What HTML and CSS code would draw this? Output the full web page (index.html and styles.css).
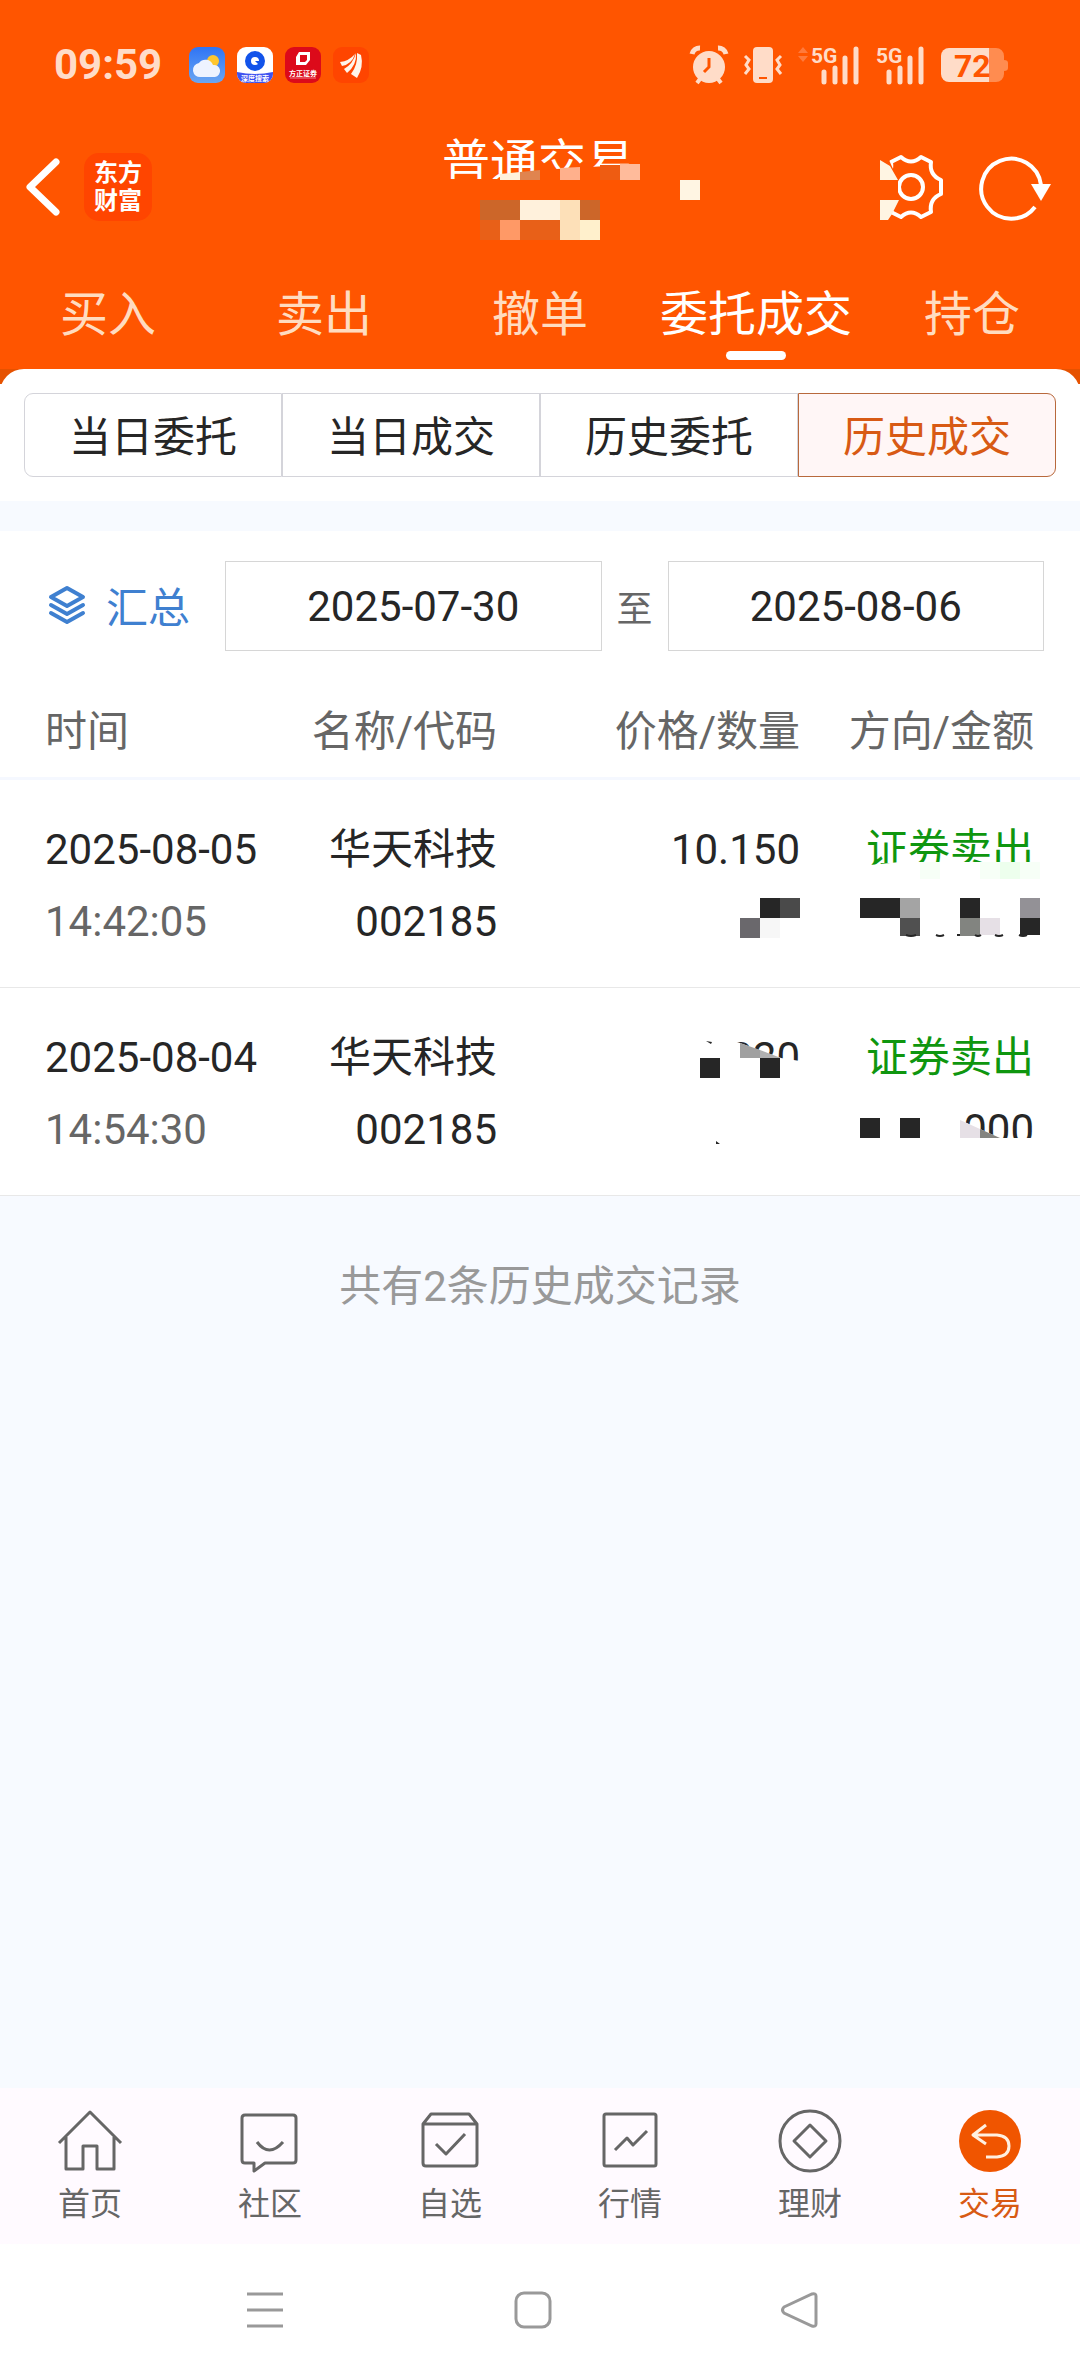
FILE: index.html
```
<!DOCTYPE html>
<html lang="zh-CN">
<head>
    <meta charset="UTF-8">
    <meta name="viewport" content="width=device-width, initial-scale=1.0">
    <title>普通交易</title>
    <link rel="stylesheet" href="styles.css">
</head>
<body>
    <header class="header">
        <div class="status-bar">
            <span class="time">09:59</span>
            <div class="app-list">
                <svg width="36" height="36" viewBox="0 0 36 36">
                    <defs>
                        <linearGradient id="sky" x1="0" y1="0" x2="0" y2="1">
                            <stop offset="0" stop-color="#2f74f5"/>
                            <stop offset="1" stop-color="#6aa6f2"/>
                        </linearGradient>
                    </defs>
                    <rect width="36" height="36" rx="9" fill="url(#sky)"/>
                    <circle cx="24" cy="14" r="6" fill="#ffc62e"/>
                    <path d="M12 30a7 7 0 0 1-2-14 8 8 0 0 1 14 2 6 6 0 0 1 2 12z" fill="#eef3ff"/>
                </svg>
                <svg width="36" height="36" viewBox="0 0 36 36">
                    <rect width="36" height="36" rx="9" fill="#fff"/>
                    <path d="M0 25q18 4 36 0v2a9 9 0 0 1-9 9H9a9 9 0 0 1-9-9z" fill="#3f52f0"/>
                    <circle cx="18" cy="14" r="7" fill="none" stroke="#1253ea" stroke-width="6"/>
                    <path d="M18 14h6v6z" fill="#1253ea"/>
                    <text x="18" y="34" class="app-text">深度搜索</text>
                </svg>
                <svg width="36" height="36" viewBox="0 0 36 36">
                    <rect width="36" height="36" rx="9" fill="#dc0a1a"/>
                    <path d="M14 5h11v8l-4 5H11v-8zM15 8v7h5l2-2V8z" fill="#fff" fill-rule="evenodd"/>
                    <text x="18" y="29" class="app-text">方正证券</text>
                    <path d="M5 31h26" stroke="#f0808a"/>
                </svg>
                <svg width="36" height="36" viewBox="0 0 36 36">
                    <rect width="36" height="36" rx="9" fill="#ff4500"/>
                    <path d="M7 15q9-1 15-8-3 10-13 12zM11 22q9-5 12-16 1 12-9 20zM18 27q7-9 6-21l4 2q3 12-4 23z" fill="#fff5ea"/>
                </svg>
            </div>
            <div class="status-icons">
                <svg width="38" height="38" viewBox="0 0 38 38">
                    <circle cx="19" cy="21" r="16" fill="#ffdcc8"/>
                    <path d="M2 8a8 8 0 0 1 8-6M28 2a8 8 0 0 1 8 6" fill="none" stroke="#ffdcc8" stroke-width="5"/>
                    <path d="M10 33l-3 4M28 33l3 4" stroke="#ffdcc8" stroke-width="4"/>
                    <path d="M19 12v9l-5 5" fill="none" stroke="#ff5500" stroke-width="3"/>
                </svg>
                <svg width="38" height="38" viewBox="0 0 38 38">
                    <rect x="9" y="1" width="20" height="36" rx="4" fill="#ffdcc8"/>
                    <path d="M15 32h8" stroke="#ff5500" stroke-width="2"/>
                    <path d="M1 10l4 4-3 5 3 4-4 5M37 10l-4 4 3 5-3 4 4 5" fill="none" stroke="#ffdcc8" stroke-width="3"/>
                </svg>
                <svg width="62" height="38" viewBox="0 0 62 38">
                    <path d="M0 7l5-6 5 6zM0 10h10l-5 6z" fill="#ff7a3c"/>
                    <text x="13" y="17" class="net-text">5G</text>
                    <path d="M26 36V26M37 36V22M47 36V12M58 36V3" stroke="#ffdcc8" stroke-width="5" stroke-linecap="round"/>
                </svg>
                <svg width="49" height="38" viewBox="0 0 49 38">
                    <text x="0" y="17" class="net-text">5G</text>
                    <path d="M13 36V26M24 36V22M34 36V12M45 36V3" stroke="#ffdcc8" stroke-width="5" stroke-linecap="round"/>
                </svg>
                <svg width="67" height="34" viewBox="0 0 67 34">
                    <path d="M48 0h7a8 8 0 0 1 8 8v4q4 0 4 3v5q0 3-4 3v3a8 8 0 0 1-8 8h-7z" fill="#ff8c50"/>
                    <path d="M8 0h40v34H8a8 8 0 0 1-8-8V8a8 8 0 0 1 8-8z" fill="#ffdcc8"/>
                    <text x="13" y="29" class="battery-text">72</text>
                </svg>
            </div>
        </div>
        <div class="title-bar">
            <div class="title-left">
                <a href="#" class="back" aria-label="返回">
                    <svg width="34" height="58" viewBox="0 0 34 58">
                        <path d="M30 4L4 29l26 25" fill="none" stroke="#fff" stroke-width="7" stroke-linecap="round" stroke-linejoin="round"/>
                    </svg>
                </a>
                <a href="#" class="logo">东方<br>财富</a>
            </div>
            <h1>普通交易</h1>
            <div class="title-right">
                <button class="icon-btn" aria-label="设置">
                    <svg width="66" height="66" viewBox="-33 -33 66 66">
                        <path d="M-10-30Q0-21 10-30L20-25Q18-12 30-7L30 7Q18 12 20 25L10 30Q0 21-10 30L-20 25Q-18 12-30 7L-30-7Q-18-12-20-25Z" fill="none" stroke="#fff" stroke-width="4" stroke-linejoin="round"/>
                        <circle r="12" fill="none" stroke="#fff" stroke-width="4"/>
                        <path d="M-33-27h11l9 20v14l-8 20h-12z" fill="#ff5500"/>
                        <path d="M-31-27l10 6 8 14h-18zM-31 13h19l-7 14-4 6h-8z" fill="#fff5e3"/>
                    </svg>
                </button>
                <button class="icon-btn" aria-label="刷新">
                    <svg width="72" height="66" viewBox="-33 -33 72 66">
                        <path d="M24 20A30 30 0 1 1 30-2" fill="none" stroke="#fff" stroke-width="4"/>
                        <path d="M20-3h20L30 14z" fill="#fff"/>
                    </svg>
                </button>
            </div>
            <svg class="title-mosaic" width="340" height="114" viewBox="0 0 340 114">
                <path d="M70 49h60l40-9 100-6v36H70z" fill="#ff5500"/>
                <path d="M130 44l20-2v8h-20z" fill="#fff1dc"/>
                <path d="M150 42l20-2v10h-20z" fill="#e0844f"/>
                <path d="M190 38l20-1v13h-20z" fill="#ffb08c"/>
                <path d="M230 35h20v15h-20z" fill="#ee5c12"/>
                <path d="M250 34h20v16h-20z" fill="#ffbb9b"/>
                <path d="M310 50h20v20h-20z" fill="#fff5e3"/>
                <path d="M110 70h40v20h-40zM210 70h20v20h-20z" fill="#cc6629"/>
                <path d="M150 70h40v20h-40z" fill="#fff1dc"/>
                <path d="M190 70h20v40h-20z" fill="#fde0b8"/>
                <path d="M110 90h20v20h-20zM150 90h40v20h-40z" fill="#e86018"/>
                <path d="M130 90h20v20h-20z" fill="#ff9966"/>
                <path d="M210 90h20v20h-20z" fill="#fff0cc"/>
            </svg>
        </div>
        <nav class="tabs">
            <a href="#">买入</a>
            <a href="#">卖出</a>
            <a href="#">撤单</a>
            <a href="#" class="active">委托成交</a>
            <a href="#">持仓</a>
        </nav>
    </header>
    <main class="main">
        <div class="panel-wrapper">
            <div class="panel">
                <div class="segment">
                    <button>当日委托</button>
                    <button>当日成交</button>
                    <button>历史委托</button>
                    <button class="active">历史成交</button>
                </div>
            </div>
        </div>
        <section class="records">
            <form class="filter">
                <button type="button" class="summary">
                    <svg width="38" height="38" viewBox="0 0 38 38">
                        <path d="M19 2l16 9-16 9L3 11zM3 19l16 9 16-9M3 27l16 9 16-9" fill="none" stroke="#3f80d0" stroke-width="4" stroke-linecap="round" stroke-linejoin="round"/>
                    </svg>
                    汇总
                </button>
                <input type="text" id="start" aria-label="开始日期" value="2025-07-30">
                <label for="end">至</label>
                <input type="text" id="end" value="2025-08-06">
            </form>
            <table class="list">
                <thead>
                    <tr>
                        <th class="col-time">时间</th>
                        <th class="col-name">名称/代码</th>
                        <th class="col-price">价格/数量</th>
                        <th class="col-side">方向/金额</th>
                    </tr>
                </thead>
                <tbody>
                    <tr>
                        <td class="col-time">2025-08-05<br><span class="clock">14:42:05</span></td>
                        <td class="col-name">华天科技<br>002185</td>
                        <td class="col-price">10.150
                            <svg class="mosaic" width="120" height="207" viewBox="0 0 120 207">
                                <path d="M80 118h20v20H80z" fill="#262626"/>
                                <path d="M100 118h20v20h-20z" fill="#4a4a4a"/>
                                <path d="M60 138h20v20H60z" fill="#6a686c"/>
                                <path d="M80 138h20v20H80z" fill="#f7f7f7"/>
                            </svg>
                        </td>
                        <td class="col-side"><span class="sell">证券卖出</span>
                            <svg class="mosaic" width="240" height="207" viewBox="0 0 240 207">
                                <path d="M20 86l40-4h150v24H20z" fill="#fff"/>
                                <path d="M80 82h20v17H80zM140 82h20v17h-20zM180 82h20v17h-20z" fill="#f7fff7"/>
                                <path d="M160 82h20v17h-20z" fill="#edffed"/>
                                <path d="M20 118h40v20H20zM120 118h20v20h-20zM180 138h20v17h-20z" fill="#262626"/>
                                <path d="M60 118h20v20H60z" fill="#a4a4a4"/>
                                <path d="M60 138h20v18H60z" fill="#505050"/>
                                <path d="M120 138h20v18h-20z" fill="#828480"/>
                                <path d="M140 138h20v17h-20z" fill="#e6e0e6"/>
                                <path d="M180 118h20v20h-20z" fill="#939196"/>
                                <path d="M66 155q5 2 10 0M96 155q4 2 8 0M117 155h3M135 155q3 2 6 0M155 155q4 2 8 0M179 155q4 2 8 0" fill="none" stroke="#262626" stroke-width="2"/>
                            </svg>
                        </td>
                    </tr>
                    <tr>
                        <td class="col-time">2025-08-04<br><span class="clock">14:54:30</span></td>
                        <td class="col-name">华天科技<br>002185</td>
                        <td class="col-price">020
                            <svg class="mosaic" width="120" height="207" viewBox="0 0 120 207">
                                <path d="M40 50l20 5 41 15 19 3v20H40z" fill="#fff"/>
                                <path d="M60 55l20 7v8H60z" fill="#a0a0a0"/>
                                <path d="M80 62l21 8H80z" fill="#b0b0b0"/>
                                <path d="M20 70h20v20H20zM80 70h20v20H80zM26 53l6 1-1 2zM36 153l4 3h-4z" fill="#262626"/>
                            </svg>
                        </td>
                        <td class="col-side"><span class="sell">证券卖出</span><br>000
                            <svg class="mosaic" width="240" height="207" viewBox="0 0 240 207">
                                <path d="M110 129l10 3 40 18h50v18H110z" fill="#fff"/>
                                <path d="M120 132l20 9v9h-20z" fill="#e6e0e6"/>
                                <path d="M140 141l20 9h-20z" fill="#848480"/>
                                <path d="M20 130h20v20H20zM60 130h20v20H60z" fill="#262626"/>
                            </svg>
                        </td>
                    </tr>
                </tbody>
            </table>
        </section>
        <p class="total">共有2条历史成交记录</p>
    </main>
    <nav class="tab-bar">
        <a href="#">
            <svg width="66" height="66" viewBox="0 0 66 66">
                <path d="M2 35L33 4l31 31M9 29v32h17V38h14v23h17V29" fill="none"/>
            </svg>
            首页
        </a>
        <a href="#">
            <svg width="66" height="66" viewBox="0 0 66 66">
                <path d="M8 7h48q3 0 3 3v42q0 3-3 3H28l-11 8v-8H8q-3 0-3-3V10q0-3 3-3zM20 34q12 16 26 0" fill="none"/>
            </svg>
            社区
        </a>
        <a href="#">
            <svg width="66" height="66" viewBox="0 0 66 66">
                <path d="M6 16l8-10h38l8 10v39q0 3-3 3H9q-3 0-3-3zM6 16h54M19 36l10 10 19-20" fill="none"/>
            </svg>
            自选
        </a>
        <a href="#">
            <svg width="66" height="66" viewBox="0 0 66 66">
                <rect x="7" y="6" width="52" height="52" rx="2" fill="none"/>
                <path d="M18 42l12-12 6 7 14-14" fill="none"/>
            </svg>
            行情
        </a>
        <a href="#">
            <svg width="66" height="66" viewBox="0 0 66 66">
                <circle cx="33" cy="33" r="30" fill="none"/>
                <path d="M33 17l16 16-16 16-16-16z" fill="none"/>
            </svg>
            理财
        </a>
        <a href="#" class="active">
            <svg width="66" height="66" viewBox="0 0 66 66">
                <circle cx="33" cy="33" r="31" fill="#f05500" stroke="none"/>
                <path d="M29 17L16 27l13 9M16 27h24q12 1 12 11t-12 11H29" fill="none" stroke="#fff0e0"/>
            </svg>
            交易
        </a>
    </nav>
    <div class="system-bar">
        <button aria-label="最近任务">
            <svg width="38" height="38" viewBox="0 0 38 38">
                <path d="M1 3h36M1 19h36M1 35h36"/>
            </svg>
        </button>
        <button aria-label="主屏幕">
            <svg width="38" height="38" viewBox="0 0 38 38">
                <rect x="2" y="2" width="34" height="34" rx="8"/>
            </svg>
        </button>
        <button aria-label="返回上一页">
            <svg width="38" height="38" viewBox="0 0 38 38">
                <path d="M3 16L31 3q4-1 4 2v28q0 3-4 2L3 22q-3-3 0-6z"/>
            </svg>
        </button>
    </div>
</body>
</html>
```
FILE: styles.css
```
* {
    box-sizing: border-box;
    margin: 0;
    padding: 0;
}
body {
    display: flex;
    flex-direction: column;
    min-height: 100vh;
    background: #f7faff;
    color: #262626;
    font-family: Roboto, "Noto Sans CJK SC", sans-serif;
    font-size: 42px;
}
a {
    color: inherit;
    text-decoration: none;
}
button {
    border: 0;
    background: none;
    color: inherit;
    font: inherit;
}
svg {
    display: block;
    flex: none;
    overflow: visible;
}

/* 顶部 */
.header {
    background: #ff5500;
    color: #fff;
}
.status-bar {
    display: flex;
    align-items: center;
    height: 130px;
    padding: 0 72px 0 54px;
}
.time {
    color: #ffdcc8;
    font-weight: 700;
    line-height: 48px;
}
.app-list {
    display: flex;
    gap: 12px;
    margin-left: 27px;
}
.app-text {
    fill: #fff;
    font-size: 7px;
    font-weight: 700;
    text-anchor: middle;
}
.status-icons {
    display: flex;
    align-items: center;
    gap: 16px;
    margin-left: auto;
}
.net-text {
    fill: #ffdcc8;
    font-size: 21px;
    font-weight: 700;
}
.battery-text {
    fill: #ff5500;
    font-size: 32px;
    font-weight: 700;
}
.title-bar {
    position: relative;
    display: grid;
    grid-template-columns: 1fr auto 1fr;
    align-items: center;
    height: 114px;
    padding: 0 30px 0 26px;
}
.title-left {
    display: flex;
    align-items: center;
    gap: 24px;
}
.title-right {
    display: flex;
    align-items: center;
    justify-content: flex-end;
    gap: 34px;
}
.logo {
    width: 68px;
    height: 68px;
    padding-top: 6px;
    border-radius: 15px;
    background: #ff4500;
    font-size: 24px;
    font-weight: 700;
    line-height: 28px;
    text-align: center;
}
.title-bar h1 {
    align-self: start;
    font-size: 48px;
    font-weight: 400;
    line-height: 66px;
}
.title-mosaic {
    position: absolute;
    top: 0;
    left: 50%;
    margin-left: -170px;
}
.tabs {
    display: grid;
    grid-template-columns: repeat(5, 1fr);
}
.tabs a {
    padding: 38px 0 9px;
    color: #ffdcc0;
    font-size: 48px;
    line-height: 66px;
    text-align: center;
}
.tabs a::after {
    content: "";
    display: block;
    width: 60px;
    height: 9px;
    margin: 3px auto 0;
    border-radius: 5px;
}
.tabs .active {
    color: #fff;
}
.tabs .active::after {
    background: #fff;
}

/* 内容 */
.main {
    flex: 1;
}
.panel-wrapper {
    background: linear-gradient(#e65200 15px, #fff 15px);
}
.panel {
    padding: 24px;
    border-radius: 24px 24px 0 0;
    background: #fff;
}
.segment {
    display: grid;
    grid-template-columns: repeat(4, 1fr);
}
.segment button {
    height: 84px;
    padding-bottom: 3px;
    border: 1px solid #d4d4da;
}
.segment button:first-child {
    border-radius: 9px 0 0 9px;
}
.segment button:last-child {
    border-radius: 0 9px 9px 0;
}
.segment .active {
    border-color: #b8693c;
    background: #fff6f6;
    color: #d85a14;
}
.records {
    margin-top: 30px;
    background: #fff;
}
.filter {
    display: flex;
    align-items: center;
    padding: 30px 36px 33px 48px;
}
.summary {
    display: flex;
    align-items: center;
    gap: 20px;
    margin-right: 35px;
    padding-bottom: 3px;
    color: #3f80d0;
}
.filter input {
    flex: 1;
    min-width: 0;
    height: 90px;
    border: 1px solid #d6d6d6;
    background: #fff;
    color: #262626;
    font: inherit;
    text-align: center;
}
.filter label {
    width: 66px;
    color: #666;
    font-size: 36px;
    text-align: center;
}
.list {
    width: 100%;
    border-spacing: 0;
    table-layout: fixed;
}
.list th {
    height: 96px;
    padding-bottom: 6px;
    border-bottom: 3px solid #f5f8ff;
    color: #666;
    font-weight: 400;
    text-align: right;
}
.list td {
    position: relative;
    height: 208px;
    padding-top: 34px;
    border-bottom: 1px solid #e8e8e8;
    line-height: 72px;
    text-align: right;
    vertical-align: top;
}
.list .col-time {
    width: 265px;
    padding-left: 45px;
    text-align: left;
}
.list .col-name {
    width: 232px;
}
.list .col-side {
    width: 280px;
    padding-right: 46px;
}
.clock {
    color: #666;
}
.sell {
    color: #0f960f;
}
.mosaic {
    position: absolute;
    top: 0;
    right: 0;
}
.total {
    padding-top: 61px;
    color: #999;
    line-height: 60px;
    text-align: center;
}

/* 底部 */
.tab-bar {
    display: grid;
    grid-template-columns: repeat(6, 1fr);
    height: 156px;
    background: #fffaff;
    color: #666;
    font-size: 32px;
    line-height: 48px;
}
.tab-bar a {
    display: flex;
    flex-direction: column;
    align-items: center;
    gap: 6px;
    padding-top: 20px;
}
.tab-bar svg {
    stroke: #666;
    stroke-width: 3;
    stroke-linejoin: round;
}
.tab-bar .active {
    color: #d85a14;
}
.system-bar {
    display: flex;
    justify-content: space-between;
    align-items: center;
    height: 132px;
    padding: 0 261px 0 246px;
    background: #fff;
}
.system-bar svg {
    fill: none;
    stroke: #999;
    stroke-width: 3;
}
```
